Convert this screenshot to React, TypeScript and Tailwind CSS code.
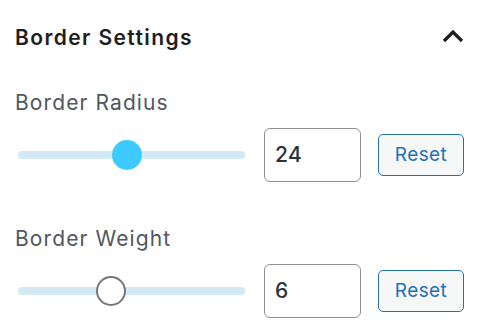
import { useState } from "react"

interface RangeRowProps {
  label: string
  value: number
  percent: number
  active?: boolean
}

const RangeRow = ({ label, value, percent, active }: RangeRowProps) => {
  return (
    <div>
      <div className="text-[21px] leading-[24px] tracking-[1.1px] text-[#50575e]">{label}</div>
      <div className="mt-[13px] flex items-center">
        <div className="relative ml-[3px] h-[30px] w-[227px]">
          <div className="absolute left-0 right-0 top-[11px] h-[8px] rounded-full bg-[#d3e9f4]" />
          <div
            className={
              active
                ? "absolute top-0 h-[30px] w-[30px] -translate-x-1/2 rounded-full bg-[#3dcbff]"
                : "absolute top-0 h-[30px] w-[30px] -translate-x-1/2 rounded-full border-2 border-[#757575] bg-white"
            }
            style={{ left: `${percent}%` }}
          />
        </div>
        <div className="ml-[19px] flex h-[54px] w-[97px] items-center rounded-[6px] border-[1.5px] border-[#8c8f94] bg-white px-[10px] text-[21px] font-medium tracking-[0.5px] text-[#2c3338]">
          {value}
        </div>
        <button className="ml-[17px] h-[42px] w-[86px] rounded-[5px] border-[1.5px] border-[#2271b1] bg-[#f6f7f7] text-[19px] tracking-[0.4px] text-[#2271b1]">
          Reset
        </button>
      </div>
    </div>
  )
}

export default function App() {
  const [open] = useState(true)
  return (
    <div
      className="h-[331px] w-[493px] overflow-hidden bg-white"
      style={{ fontFamily: "Inter, 'Liberation Sans', sans-serif" }}
    >
      <div className="flex items-center justify-between pl-[15px] pr-[28px] pt-[25px]">
        <div className="text-[21px] font-semibold leading-[26px] tracking-[1.4px] text-[#1e1e1e]">Border Settings</div>
        <svg width="24" height="16" viewBox="0 0 24 16" fill="none">
          {open && <path d="M3 11 L12 2 L21 11" stroke="#1e1e1e" strokeWidth="3.2" />}
        </svg>
      </div>
      <div className="mt-[40px] flex flex-col gap-[45px] pl-[15px]">
        <RangeRow label="Border Radius" value={24} percent={48} active />
        <RangeRow label="Border Weight" value={6} percent={41} />
      </div>
    </div>
  )
}
